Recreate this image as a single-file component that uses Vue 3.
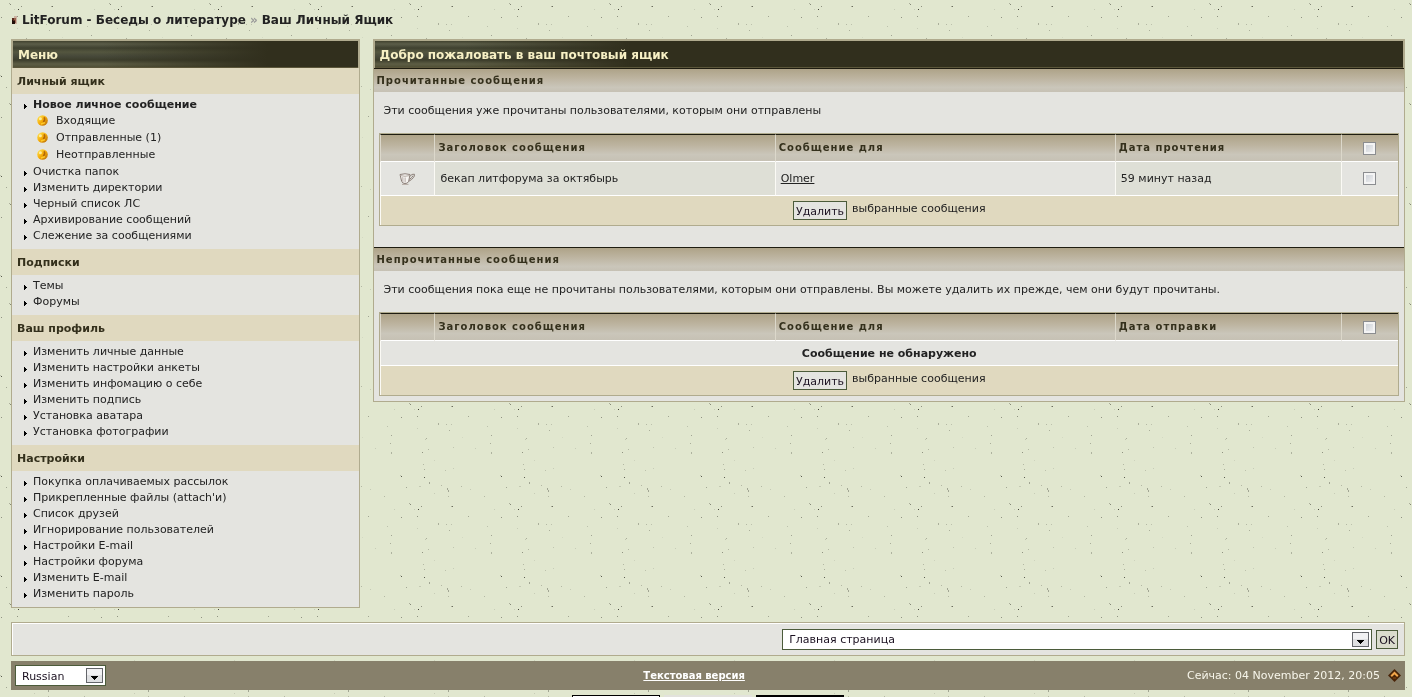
<script setup>
import { ref } from 'vue'

const specks = [
  [18, 9, 1, 1, 0.85], [10, 4, 1, 1, 0.5], [9, 3, 1, 1, 0.3], [21, 6, 1, 1, 0.45], [52, 6, 1, 1, 0.65], [51, 6, 1, 1, 0.3],
  [17, 16, 1, 1, 0.45], [1, 17, 1, 1, 0.45], [68, 16, 1, 1, 0.35], [38, 23, 1, 2, 0.3], [46, 24, 1, 1, 0.25],
  [51, 24, 1, 1, 0.2], [49, 30, 1, 1, 0.3], [87, 26, 1, 1, 0.2], [91, 35, 1, 1, 0.35], [90, 43, 1, 1, 0.3],
  [91, 52, 1, 2, 0.28], [26, 38, 1, 1, 0.3], [25, 39, 1, 1, 0.18], [28, 49, 1, 1, 0.25], [22, 52, 1, 1, 0.45],
  [53, 47, 1, 1, 0.18], [75, 48, 1, 1, 0.14], [23, 64, 1, 1, 0.25], [24, 69, 1, 1, 0.3], [45, 70, 1, 1, 0.2],
  [53, 68, 1, 1, 0.14], [1, 76, 1, 1, 0.75], [0, 75, 1, 1, 0.2], [24, 77, 1, 1, 0.75], [29, 82, 1, 2, 0.35],
  [6, 87, 1, 1, 0.35], [41, 85, 1, 1, 0.25], [47, 88, 1, 2, 0.35], [48, 90, 1, 2, 0.35], [61, 86, 1, 1, 0.25],
  [84, 96, 1, 1, 0.25], [48, 96, 1, 1, 0.25], [70, 89, 1, 1, 0.14], [34, 93, 1, 1, 0.14], [34, 60, 1, 1, 0.1],
  [14, 9, 1, 1, 0.14], [94, 9, 1, 1, 0.14], [17, 28, 1, 1, 0.14], [19, 86, 2, 1, 0.16], [62, 37, 1, 1, 0.08]
]

const menu = [
  {
    title: 'Личный ящик',
    items: [
      { text: 'Новое личное сообщение', bold: true },
      { text: 'Входящие', folder: true },
      { text: 'Отправленные (1)', folder: true },
      { text: 'Неотправленные', folder: true },
      { text: 'Очистка папок' },
      { text: 'Изменить директории' },
      { text: 'Черный список ЛС' },
      { text: 'Архивирование сообщений' },
      { text: 'Слежение за сообщениями' }
    ]
  },
  { title: 'Подписки', items: [{ text: 'Темы' }, { text: 'Форумы' }] },
  {
    title: 'Ваш профиль',
    items: [
      { text: 'Изменить личные данные' },
      { text: 'Изменить настройки анкеты' },
      { text: 'Изменить инфомацию о себе' },
      { text: 'Изменить подпись' },
      { text: 'Установка аватара' },
      { text: 'Установка фотографии' }
    ]
  },
  {
    title: 'Настройки',
    items: [
      { text: 'Покупка оплачиваемых рассылок' },
      { text: "Прикрепленные файлы (attach'и)" },
      { text: 'Список друзей' },
      { text: 'Игнорирование пользователей' },
      { text: 'Настройки E-mail' },
      { text: 'Настройки форума' },
      { text: 'Изменить E-mail' },
      { text: 'Изменить пароль' }
    ]
  }
]

const sections = [
  {
    title: 'Прочитанные сообщения',
    note: 'Эти сообщения уже прочитаны пользователями, которым они отправлены',
    dateLabel: 'Дата прочтения',
    rows: [{ subject: 'бекап литфорума за октябырь', to: 'Olmer', date: '59 минут назад' }]
  },
  {
    title: 'Непрочитанные сообщения',
    note: 'Эти сообщения пока еще не прочитаны пользователями, которым они отправлены. Вы можете удалить их прежде, чем они будут прочитаны.',
    dateLabel: 'Дата отправки',
    rows: []
  }
]

const page = ref('Главная страница')
const language = ref('Russian')
</script>

<template>
  <div class="page">
    <svg class="paper" aria-hidden="true">
      <defs>
        <pattern id="speckle" width="100" height="100" patternUnits="userSpaceOnUse">
          <rect width="100" height="100" fill="#e1e7cf" />
          <rect
            v-for="(s, i) in specks"
            :key="i"
            :x="s[0]"
            :y="s[1]"
            :width="s[2]"
            :height="s[3]"
            :fill-opacity="s[4]"
            fill="#2c2c22"
          />
        </pattern>
        <linearGradient id="gold" x1="0" y1="0" x2="1" y2="1">
          <stop offset="0.1" stop-color="#ffe04a" />
          <stop offset="0.5" stop-color="#f5ab08" />
          <stop offset="1" stop-color="#b0640a" />
        </linearGradient>
      </defs>
      <rect width="100%" height="100%" fill="url(#speckle)" />
    </svg>

    <nav class="crumbs">
      <svg width="7" height="8" viewBox="0 0 7 8" shape-rendering="crispEdges" aria-hidden="true">
        <path d="M3 0h3v8H3z" fill="#cdb3a3" />
        <path d="M3 2h2v5H3z" fill="#9a6450" />
        <path d="M1 2h2v2h1v3H1z" fill="#5a2a1e" />
        <path d="M1 4h1v1h2v3H1z" fill="#1f0d08" />
      </svg>
      <a href="#">LitForum - Беседы о литературе</a>
      <span class="sep">»</span>
      <span>Ваш Личный Ящик</span>
    </nav>

    <div class="columns">
      <aside class="panel">
        <h2 class="bar">Меню</h2>
        <section v-for="group in menu" :key="group.title">
          <h3 class="group-title">{{ group.title }}</h3>
          <ul class="links">
            <li v-for="item in group.items" :key="item.text" :class="{ folder: item.folder, bold: item.bold }">
              <svg v-if="item.folder" class="ball" width="11" height="11" viewBox="0 0 11 11" aria-hidden="true">
                <circle cx="5.5" cy="5.5" r="5.3" fill="url(#gold)" />
                <circle cx="3.4" cy="3.8" r="1.5" fill="#fff6b8" opacity=".8" />
                <path d="M7 2.2Q8.6 4 6.4 7" fill="none" stroke="#8a3f08" stroke-width="1.5" opacity=".6" />
                <path d="M4 9l4-1.4" stroke="#ffcb2a" stroke-width="1.4" />
              </svg>
              <svg v-else class="arrow" width="3" height="5" viewBox="0 0 3 5" shape-rendering="crispEdges" aria-hidden="true">
                <path d="M0 0h1v1h1v1h1v1H2v1H1v1H0z" fill="#000" />
              </svg>
              <a href="#">{{ item.text }}</a>
            </li>
          </ul>
        </section>
      </aside>

      <main class="panel">
        <h1 class="bar">Добро пожаловать в ваш почтовый ящик</h1>
        <section v-for="(s, n) in sections" :key="s.title" class="box">
          <h2 class="strip">{{ s.title }}</h2>
          <p class="note">{{ s.note }}</p>
          <table class="grid">
            <colgroup>
              <col class="c-icon" />
              <col class="c-text" />
              <col class="c-text" />
              <col class="c-date" />
              <col class="c-tick" />
            </colgroup>
            <thead>
              <tr>
                <th></th>
                <th>Заголовок сообщения</th>
                <th>Сообщение для</th>
                <th>{{ s.dateLabel }}</th>
                <th class="mid"><input type="checkbox" :id="'all' + n" aria-label="Все" /></th>
              </tr>
            </thead>
            <tbody>
              <tr v-for="r in s.rows" :key="r.subject" class="row">
                <td class="mid">
                  <svg class="cup" width="17" height="12" viewBox="0 0 17 12" aria-hidden="true">
                    <path d="M1 1.5Q6 0 11 1.5L9.7 8.2Q8.8 10.6 6 10.6Q3.4 10.6 2.6 8z" fill="#f7f5f2" stroke="#8b7f78" />
                    <path d="M1.6 2.6Q6 4 10.4 2.6" fill="none" stroke="#b4aaa3" />
                    <path d="M3.6 4v4.6M5 4.5v5M6.4 4.5v5" stroke="#c9c1bc" />
                    <path d="M10.8 3.4Q13 .6 15.4 1.2Q16.2 4.6 10 8.2M10.4 6.4Q13.6 4.4 14 2.6" fill="none" stroke="#8b7f78" />
                    <path d="M3 11.4h6.5" stroke="#b4aaa3" />
                  </svg>
                </td>
                <td class="alt">{{ r.subject }}</td>
                <td><a class="user" href="#">{{ r.to }}</a></td>
                <td class="alt">{{ r.date }}</td>
                <td class="mid"><input type="checkbox" :id="'row' + n" :aria-label="r.subject" /></td>
              </tr>
              <tr v-if="!s.rows.length" class="empty">
                <td colspan="5">Сообщение не обнаружено</td>
              </tr>
            </tbody>
            <tfoot>
              <tr>
                <td colspan="5">
                  <div class="action">
                    <button type="button">Удалить</button>
                    <span>выбранные сообщения</span>
                  </div>
                </td>
              </tr>
            </tfoot>
          </table>
        </section>
      </main>
    </div>

    <form class="jump" @submit.prevent>
      <span class="picker wide">
        <select v-model="page" aria-label="Раздел">
          <option>Главная страница</option>
        </select>
        <svg class="drop" width="17" height="15" viewBox="0 0 17 15" shape-rendering="crispEdges" aria-hidden="true">
          <rect x=".5" y=".5" width="16" height="14" fill="#dfe0e2" stroke="#63656a" />
          <rect x="1" y="1" width="15" height="6" fill="#f1f1f3" />
          <path d="M5 8h7v1h-1v1h-1v1H9v1H8v-1H7v-1H6V9H5z" fill="#000" />
        </svg>
      </span>
      <button type="submit">OK</button>
    </form>

    <footer class="foot">
      <span class="picker">
        <select v-model="language" aria-label="Язык">
          <option>Russian</option>
        </select>
        <svg class="drop" width="17" height="15" viewBox="0 0 17 15" shape-rendering="crispEdges" aria-hidden="true">
          <rect x=".5" y=".5" width="16" height="14" fill="#dfe0e2" stroke="#63656a" />
          <rect x="1" y="1" width="15" height="6" fill="#f1f1f3" />
          <path d="M5 8h7v1h-1v1h-1v1H9v1H8v-1H7v-1H6V9H5z" fill="#000" />
        </svg>
      </span>
      <a class="lite" href="#">Текстовая версия</a>
      <span class="now">
        Сейчас: 04 November 2012, 20:05
        <a href="#" aria-label="Наверх">
          <svg width="13" height="13" viewBox="0 0 13 13">
            <path d="M6.5 0L13 6.5 6.5 13 0 6.5z" fill="#4a2508" />
            <path d="M3.2 7.2L6.5 4l3.3 3.2" fill="none" stroke="#f2a64a" stroke-width="2" />
            <path d="M5 9h3" stroke="#8a4a12" />
          </svg>
        </a>
      </span>
    </footer>

    <div class="badges">
      <span class="badge light"></span>
      <span class="badge grey"></span>
      <span class="badge dark"></span>
    </div>
  </div>
</template>

<style>
html {
  scrollbar-width: none;
  background: #e1e7cf;
}
</style>

<style scoped>
.page {
  padding: 12px 7px 0 11px;
  font-family: Verdana, "DejaVu Sans", sans-serif;
  font-size: 11px;
  line-height: 16px;
  color: #222;
}
.paper {
  position: fixed;
  inset: 0;
  width: 100%;
  height: 100%;
  z-index: -1;
}
a {
  color: inherit;
  text-decoration: none;
}
h1, h2, h3, p, ul {
  margin: 0;
  padding: 0;
}
.crumbs {
  display: flex;
  align-items: center;
  gap: 4px;
  height: 16px;
  margin-bottom: 11px;
  font-size: 12px;
  font-weight: bold;
}
.sep {
  color: #999;
}
.columns {
  display: grid;
  grid-template-columns: 25% minmax(0, 1fr);
  gap: 13px;
  align-items: start;
}
.panel {
  border: 1px solid #b0ab8e;
  background: #e4e4e0;
}
.bar {
  box-sizing: border-box;
  height: 28px;
  padding: 2px 5px 0;
  border: 1px solid #b0ab8e;
  border-bottom: 0;
  font-size: 12px;
  line-height: 25px;
  color: #f7f0c4;
  background:
    linear-gradient(to bottom, transparent 26px, #5b563a 26px),
    linear-gradient(to right, transparent 90px, #312f1d 255px),
    linear-gradient(to bottom, #41422f 0, #5b5d49 3px, #3f4130 7px, #54563f 11px, #47493a 15px, #3d3e2c 19px, #5d5d44 23px, #4d4c33 27px);
}
.group-title {
  padding: 2px 5px 0;
  font-size: 11px;
  line-height: 24px;
  background: #e0d9bf;
  color: #34301c;
}
.links {
  padding: 2px 0 6px 12px;
  list-style: none;
}
.links li {
  box-sizing: border-box;
  display: flex;
  align-items: center;
  gap: 6px;
  height: 16px;
  padding-top: 2px;
}
.links .bold {
  font-weight: bold;
}
.links .folder {
  height: 17px;
  padding: 0 0 0 13px;
  gap: 8px;
}
.arrow {
  margin-top: 2px;
}
.strip {
  padding: 1px 3px 0;
  border-top: 1px solid #1e1c10;
  font-size: 10px;
  line-height: 22px;
  letter-spacing: 1px;
  color: #34301c;
  background: linear-gradient(#aea388, #bdb4a0 40%, #cac6ba 80%, #c6c1b4);
}
.note {
  padding: 11px 10px 14px;
}
.box {
  padding-bottom: 21px;
}
.box:last-child {
  padding-bottom: 5px;
}
.grid {
  width: calc(100% - 10px);
  margin: 0 5px;
  table-layout: fixed;
  border-collapse: separate;
  border-spacing: 0;
  border: 1px solid #b0ab8e;
}
.c-icon {
  width: 5.4%;
}
.c-tick {
  width: 5.6%;
}
.c-text {
  width: 33.4%;
}
.c-date {
  width: 22.2%;
}
.grid th, .grid td {
  box-sizing: border-box;
  padding: 0 3px;
  border-left: 1px solid #fbfaf5;
  border-bottom: 1px solid #fff;
  text-align: left;
}
.grid th {
  height: 28px;
  border-top: 1px solid #1e1c10;
  border-left-color: #dcd8cb;
  font-size: 10px;
  letter-spacing: 1px;
  color: #34301c;
  background: linear-gradient(#aea388, #bdb4a0 40%, #cac6ba 75%, #c6c1b4);
}
.row td {
  height: 34px;
  padding: 0 5px;
}
.grid .alt {
  background: #dedfd6;
}
.grid .mid {
  text-align: center;
}
.user {
  text-decoration: underline;
}
.grid .empty td {
  height: 25px;
  padding-top: 1px;
  text-align: center;
  font-weight: bold;
}
.grid tfoot td {
  height: 29px;
  border-bottom: 0;
  background: #e0d9bf;
}
.action {
  display: flex;
  justify-content: center;
  align-items: flex-start;
  gap: 5px;
}
input[type="checkbox"] {
  appearance: none;
  display: block;
  box-sizing: border-box;
  width: 13px;
  height: 13px;
  margin: 0 auto;
  border: 1px solid #8b8d90;
  background: linear-gradient(135deg, #c6cbd2, #f6f6f6);
  box-shadow: inset 0 0 0 2px #f4f4f4;
}
.cup {
  display: block;
  margin: 0 auto;
}
button {
  box-sizing: border-box;
  height: 19px;
  padding: 2px 2px 0;
  border: 1px solid #4b5b3a;
  background: #e4e4e0;
  color: #1a1020;
  font: inherit;
  line-height: 15px;
}
.jump {
  display: flex;
  justify-content: flex-end;
  align-items: center;
  gap: 4px;
  height: 32px;
  margin-top: 14px;
  padding-right: 6px;
  border: 1px solid #b0ab8e;
  box-shadow: inset 1px 1px 0 #fff;
  background: #e4e4e0;
}
.jump button {
  background: #dadccd;
}
.picker {
  position: relative;
  width: 91px;
}
.wide {
  width: 590px;
}
.picker select {
  appearance: none;
  display: block;
  box-sizing: border-box;
  width: 100%;
  height: 21px;
  padding: 2px 24px 0 6px;
  border: 1px solid #4b5b3a;
  border-radius: 0;
  background: #fff;
  color: #1a1020;
  font: inherit;
}
.drop {
  position: absolute;
  top: 3px;
  right: 3px;
  pointer-events: none;
}
.foot {
  display: grid;
  grid-template-columns: 40% 18% 42%;
  align-items: center;
  height: 29px;
  margin-top: 5px;
  padding: 0 4px;
  color: #f7f5ea;
  background: #87806b;
}
.lite {
  font-size: 10px;
  font-weight: bold;
  text-align: center;
  text-decoration: underline;
  color: #fff;
}
.now {
  display: flex;
  justify-content: flex-end;
  align-items: center;
  gap: 8px;
}
.now svg {
  display: block;
}
.badges {
  display: flex;
  justify-content: center;
  gap: 4px;
  margin-top: 5px;
}
.badge {
  box-sizing: border-box;
  width: 88px;
  height: 31px;
}
.light {
  border: 1px solid #000;
  background: #fff;
}
.grey {
  background: #e2e2dc;
}
.dark {
  background: #000;
}
</style>
